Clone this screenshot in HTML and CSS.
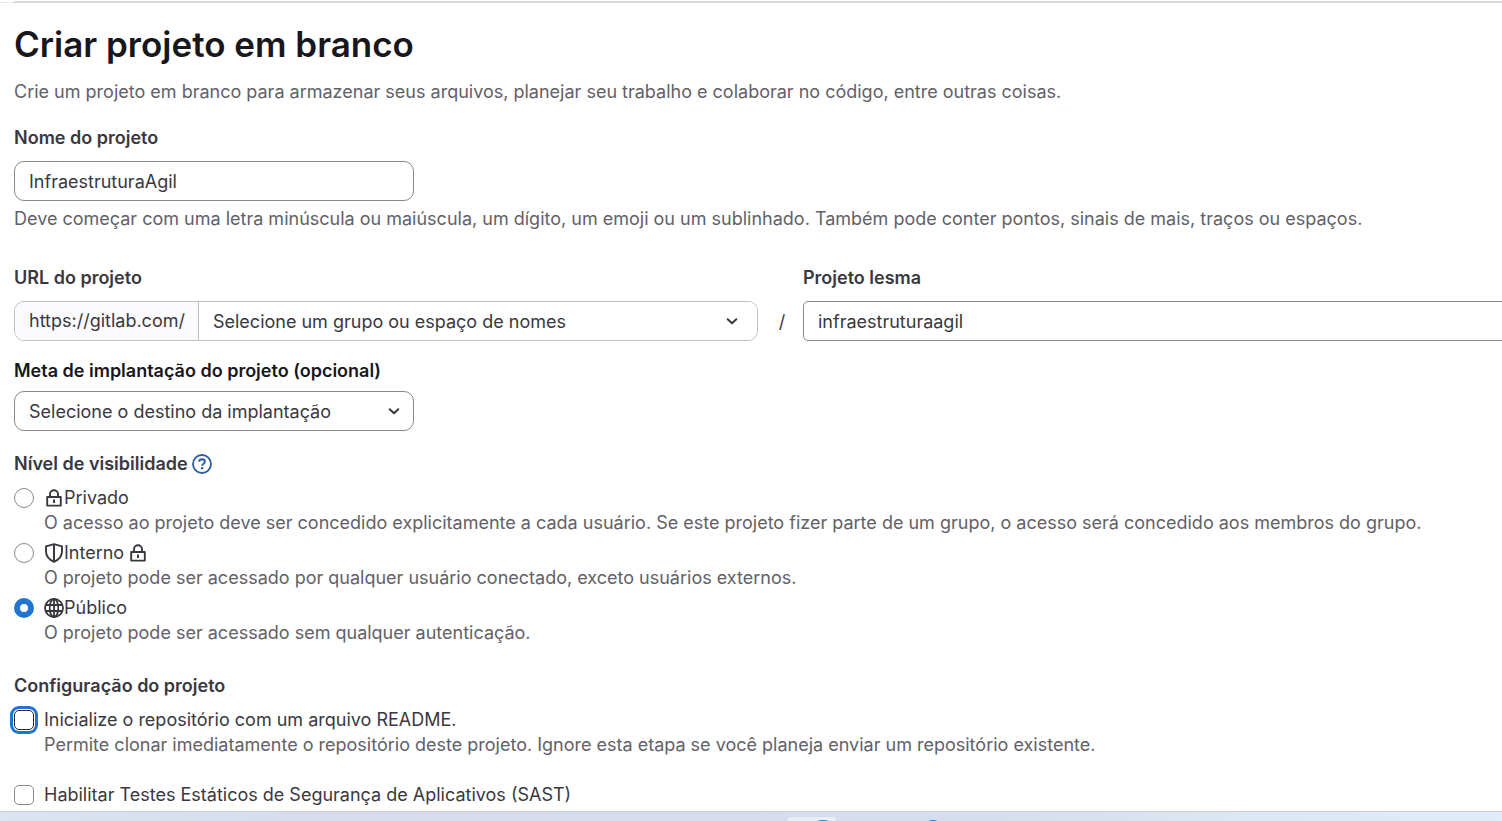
FILE: index.html
```html
<!DOCTYPE html>
<html lang="pt-BR">
<head>
<meta charset="utf-8">
<meta name="viewport" content="width=device-width, initial-scale=1">
<title>Criar projeto em branco</title>
<link rel="stylesheet" href="styles.css">
</head>
<body>
<svg class="sprite" aria-hidden="true">
  <symbol id="lock" viewBox="0 0 20 20"><path d="M3.2 9h13.600v8.600H3.200z M6 9V6.200a4 4 0 0 1 8 0V9" fill="none" stroke="currentColor" stroke-width="1.9" stroke-linejoin="round"/><path d="M9 11.500h2v3.500H9z" fill="currentColor"/></symbol>
  <symbol id="shield" viewBox="0 0 20 20"><path d="M10 1.200 18 3.400V8.500c0 4.500-3 8-8 10.400C5 16.500 2 13 2 8.500V3.400z" fill="none" stroke="currentColor" stroke-width="1.9" stroke-linejoin="round"/><path d="M10 1.200v17.500" fill="none" stroke="currentColor" stroke-width="2"/></symbol>
  <symbol id="earth" viewBox="0 0 20 20"><g fill="none" stroke="currentColor" stroke-width="1.8"><circle cx="10" cy="10" r="9"/><ellipse cx="10" cy="10" rx="4.3" ry="9"/><path d="M10 1v18M1.500 7h17M1.500 13h17"/></g></symbol>
  <symbol id="question" viewBox="0 0 20 20"><circle cx="10" cy="10" r="9" fill="none" stroke="currentColor" stroke-width="1.8"/><path d="M7.100 7.800C7.200 6.200 8.400 5.300 10 5.300s2.900.900 2.900 2.500c0 1.900-2.800 1.900-2.800 4" fill="none" stroke="currentColor" stroke-width="1.9"/><circle cx="10.100" cy="14.200" r="1.200" fill="currentColor"/></symbol>
  <symbol id="chevron" viewBox="0 0 20 20"><path d="M5.700 8.200 10 12.300l4.300-4.100" fill="none" stroke="currentColor" stroke-width="2" stroke-linecap="round" stroke-linejoin="round"/></symbol>
</svg>
<header class="topbar"><hr class="rule"></header>
<main class="page">
  <h1 class="title">Criar projeto em branco</h1>
  <p class="intro">Crie um projeto em branco para armazenar seus arquivos, planejar seu trabalho e colaborar no código, entre outras coisas.</p>
  <form class="form">
    <div class="field">
      <label class="label" for="name">Nome do projeto</label>
      <input class="control control-md" id="name" type="text" value="InfraestruturaAgil">
      <p class="hint">Deve começar com uma letra minúscula ou maiúscula, um dígito, um emoji ou um sublinhado. Também pode conter pontos, sinais de mais, traços ou espaços.</p>
    </div>
    <div class="url-row">
      <div class="field">
        <label class="label" for="namespace">URL do projeto</label>
        <div class="input-group">
          <span class="prefix">https://gitlab.com/</span>
          <div class="select-wrap select-grow">
            <select class="group-select" id="namespace"><option>Selecione um grupo ou espaço de nomes</option></select>
            <svg class="chevron"><use href="#chevron"/></svg>
          </div>
        </div>
      </div>
      <span class="slash">/</span>
      <div class="field">
        <label class="label" for="slug">Projeto lesma</label>
        <input class="control control-slug" id="slug" type="text" value="infraestruturaagil">
      </div>
    </div>
    <div class="field target">
      <label class="label label-strong" for="target">Meta de implantação do projeto (opcional)</label>
      <div class="select-wrap control-md">
        <select class="control" id="target"><option>Selecione o destino da implantação</option></select>
        <svg class="chevron"><use href="#chevron"/></svg>
      </div>
    </div>
    <fieldset class="choices visibility">
      <legend class="legend">Nível de visibilidade <a class="help" href="#help" aria-label="Ajuda"><svg class="icon"><use href="#question"/></svg></a></legend>
      <div class="choice">
        <input class="radio" type="radio" name="visibility" id="private">
        <label class="choice-label" for="private"><svg class="icon"><use href="#lock"/></svg>Privado</label>
        <p class="help-text">O acesso ao projeto deve ser concedido explicitamente a cada usuário. Se este projeto fizer parte de um grupo, o acesso será concedido aos membros do grupo.</p>
      </div>
      <div class="choice">
        <input class="radio" type="radio" name="visibility" id="internal">
        <label class="choice-label" for="internal"><svg class="icon"><use href="#shield"/></svg>Interno <svg class="icon icon-after"><use href="#lock"/></svg></label>
        <p class="help-text">O projeto pode ser acessado por qualquer usuário conectado, exceto usuários externos.</p>
      </div>
      <div class="choice">
        <input class="radio" type="radio" name="visibility" id="public" checked>
        <label class="choice-label" for="public"><svg class="icon"><use href="#earth"/></svg>Público</label>
        <p class="help-text">O projeto pode ser acessado sem qualquer autenticação.</p>
      </div>
    </fieldset>
    <fieldset class="choices settings">
      <legend class="legend">Configuração do projeto</legend>
      <div class="choice">
        <input class="checkbox checkbox-focused" type="checkbox" id="readme">
        <label class="choice-label" for="readme">Inicialize o repositório com um arquivo README.</label>
        <p class="help-text">Permite clonar imediatamente o repositório deste projeto. Ignore esta etapa se você planeja enviar um repositório existente.</p>
      </div>
      <div class="choice sast">
        <input class="checkbox" type="checkbox" id="sast">
        <label class="choice-label" for="sast">Habilitar Testes Estáticos de Segurança de Aplicativos (SAST)</label>
      </div>
    </fieldset>
  </form>
</main>
<footer class="taskbar">
  <svg class="taskbar-apps" viewBox="0 0 160 10" aria-hidden="true"><path d="M0 10V9q0-3 4-3h41q4 0 4 3v1z" fill="#e8ecf5"/><ellipse cx="36" cy="12" rx="8" ry="3" fill="#1688c8"/><ellipse cx="146" cy="12" rx="6" ry="3" fill="#0a82dc"/></svg>
</footer>
</body>
</html>
```
FILE: styles.css
```css
* { box-sizing: border-box; }
body {
  margin: 0;
  height: 100vh;
  display: flex;
  flex-direction: column;
  overflow: hidden;
  font-family: Inter, "Noto Sans", sans-serif;
  font-size: 18px;
  line-height: 25px;
  color: #3a383f;
  background: #fff;
}
.sprite { display: none; }
.topbar { flex: none; height: 3px; padding-top: 1px; border-bottom: 1px solid #e4e4e6; }
.rule { height: 2px; margin: 0 0 0 14px; border: 0; background: #d8dada; }
.page {
  flex: 1;
  min-height: 0;
  overflow: hidden;
  padding: 19px 0 0 14px;
}
.title { margin: 0; font-size: 35px; line-height: 44px; font-weight: 600; color: #18171d; }
.intro { margin: 13px 0 21px; color: #626168; }
.field { display: flex; flex-direction: column; }
.label, .legend { font-weight: 600; }
.label { margin-bottom: 11px; }
.label-strong { color: #18171d; margin-bottom: 8px; }
.control {
  width: 100%;
  height: 40px;
  padding: 0 14px;
  border: 1px solid #89888d;
  border-radius: 10px;
  background: #fff;
  color: inherit;
  font: inherit;
  appearance: none;
}
.control-md { width: 400px; max-width: 100%; }
.control-slug { border-radius: 5px; }
.hint { margin: 5px 0 0; color: #626168; }
.url-row {
  display: grid;
  grid-template-columns: 1fr 45px 1fr;
  margin: 34px -45px 0 0;
}
.input-group { display: flex; height: 40px; border: 1px solid #bfbfc3; border-radius: 10px; overflow: hidden; }
.prefix { padding: 6px 13px 6px 14px; background: #fbfafd; border-right: 1px solid #bfbfc3; }
.select-wrap { position: relative; }
.select-grow { flex: 1; }
.group-select {
  width: 100%;
  height: 100%;
  padding: 0 14px;
  border: 0;
  background: #fff;
  color: inherit;
  font: inherit;
  appearance: none;
}
.chevron { position: absolute; right: 10px; top: 50%; width: 20px; height: 20px; margin-top: -10px; pointer-events: none; }
.select-grow .chevron { right: 15px; }
.slash { align-self: end; padding: 0 0 7px 3px; text-align: center; }
.target { margin-top: 17px; }
.choices { margin: 0; padding: 0; border: 0; min-width: 0; }
.legend { display: flex; align-items: center; gap: 4px; padding: 0; margin-bottom: 9px; }
.choices.visibility { margin-top: 20px; }
.choices.settings { margin-top: 23px; }
.choice { display: grid; grid-template-columns: 20px 1fr; column-gap: 10px; align-items: center; margin-bottom: 5px; }
.choice-label { display: flex; align-items: center; }
.help-text { grid-column: 2; margin: 0; color: #626168; }
.icon { display: block; width: 20px; height: 20px; }
.icon-after { margin-left: 4px; }
.help { color: #2f5ca0; }
.radio, .checkbox {
  width: 20px;
  height: 20px;
  margin: 0;
  border: 1px solid #89888d;
  background: #fff;
  appearance: none;
}
.radio { border-radius: 50%; }
.radio:checked { border: 6px solid #1f75cb; }
.checkbox { border-radius: 5px; }
.checkbox-focused { border-color: #28272d; box-shadow: 0 0 0 1px #fff, 0 0 0 4px #1f75cb; }
.sast { margin-top: 25px; }
.taskbar {
  flex: none;
  height: 10px;
  border-top: 1px solid #c9d0df;
  background: linear-gradient(90deg, #dae5f0, #d6dcec 20%, #d6ddec 65%, #dae6f0 80%, #e0edf9);
}
.taskbar-apps { display: block; width: 160px; height: 10px; margin: -1px 0 0 calc(50% + 36px); }
```
